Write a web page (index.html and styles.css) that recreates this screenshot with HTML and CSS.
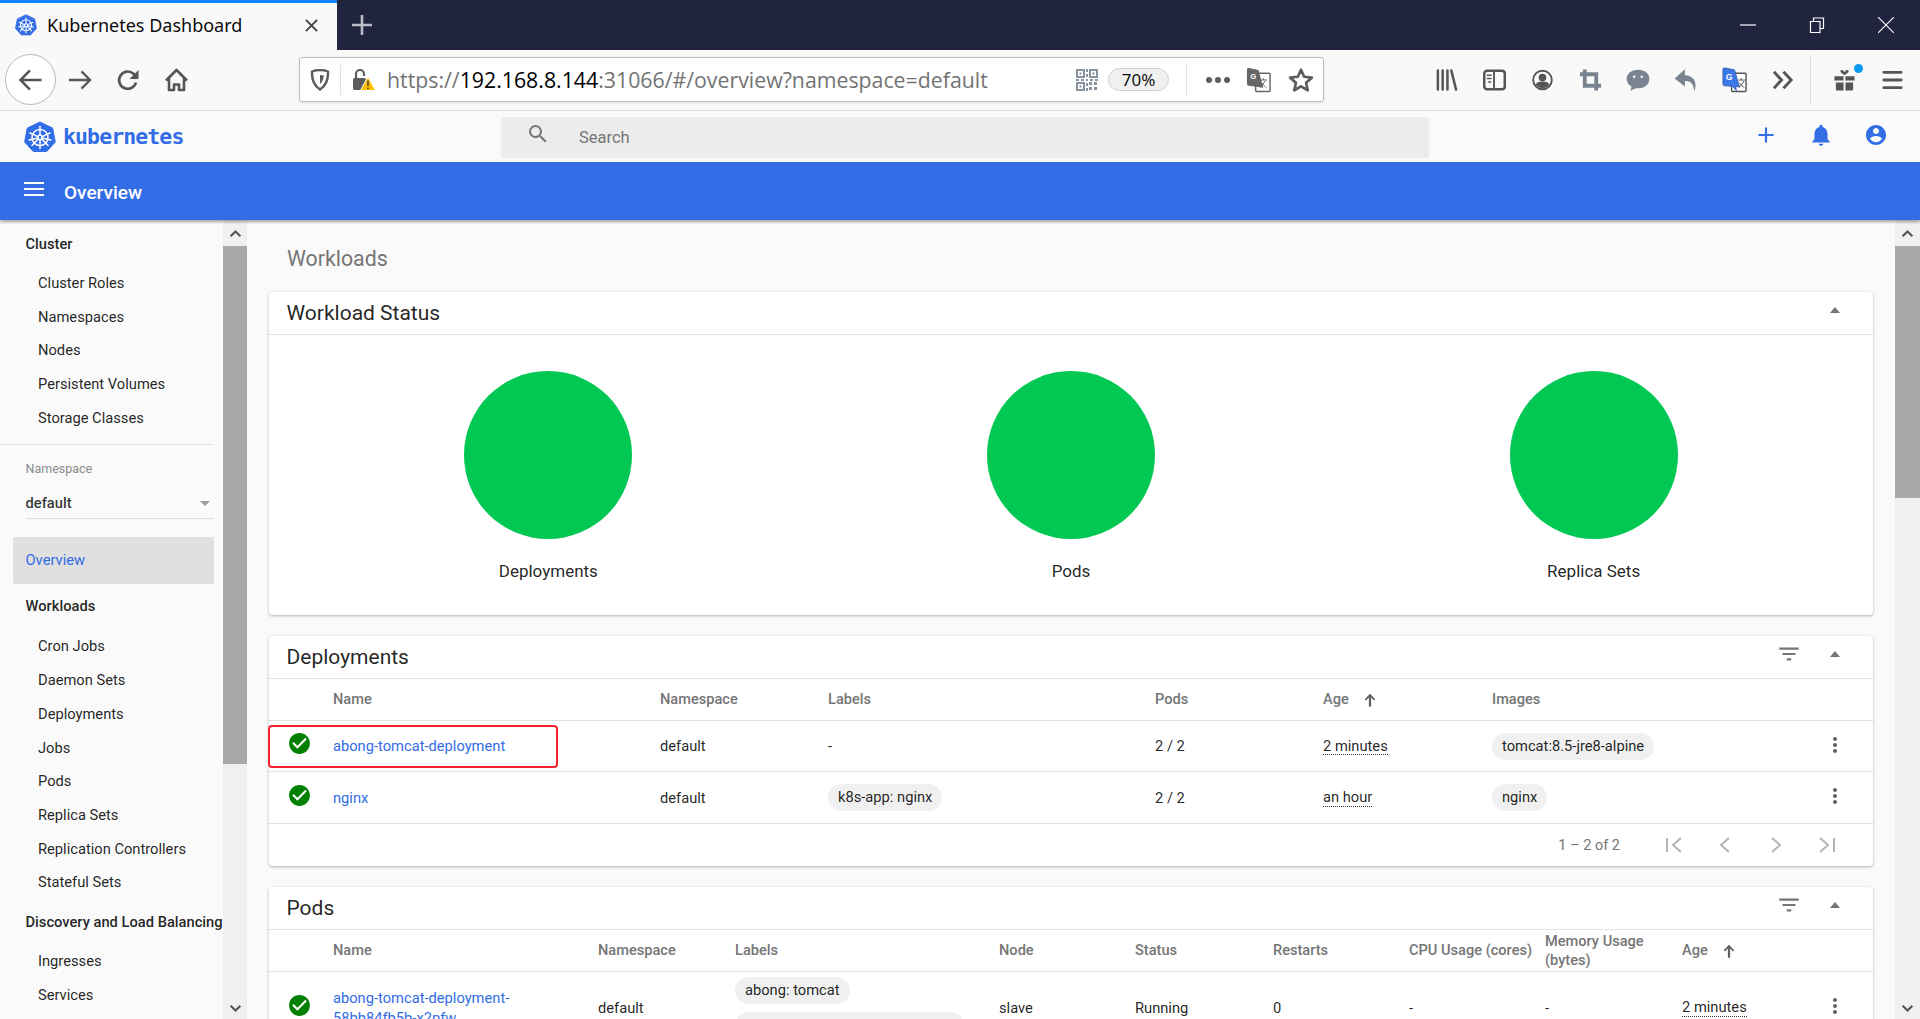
FILE: index.html
```html
<!DOCTYPE html>
<html lang="en">
<head>
<meta charset="utf-8">
<title>Kubernetes Dashboard</title>
<link rel="stylesheet" href="styles.css">
</head>
<body>
<svg class="defs" width="0" height="0" aria-hidden="true">
  <symbol id="k8s" viewBox="0 0 32 32">
    <path d="M16 .8 29.2 7.2 32 21.6 23 31.6 9 31.6 0 21.6 2.8 7.2Z" fill="#326de6" stroke="#326de6" stroke-linejoin="round" transform="translate(.6 .2) scale(.96)"/>
    <g fill="none" stroke="#fff" stroke-width="1.5" stroke-linecap="round">
      <circle cx="16" cy="16.5" r="8"/>
      <circle cx="16" cy="16.5" r="2.2"/>
      <path d="M16 14.3V5.5M16 18.7V27.5M13.9 15.6 6 12M18.1 15.6 26 12M14.2 18 8 24.5M17.8 18 24 24.5M13.8 17 5.2 19M18.2 17 26.8 19"/>
    </g>
  </symbol>
  <symbol id="ok" viewBox="0 0 24 24"><circle cx="12" cy="12" r="8" fill="#fff"/><path fill="#008000" d="M12 2C6.48 2 2 6.48 2 12s4.48 10 10 10 10-4.48 10-10S17.52 2 12 2zm-2 15l-5-5 1.41-1.41L10 14.17l7.59-7.59L19 8l-9 9z"/></symbol>
  <symbol id="filter" viewBox="0 0 24 24"><path fill="#757575" d="M10 18h4v-2h-4v2zM3 6v2h18V6H3zm3 7h12v-2H6v2z"/></symbol>
  <symbol id="kebab" viewBox="0 0 24 24"><path fill="#616161" d="M12 8c1.1 0 2-.9 2-2s-.9-2-2-2-2 .9-2 2 .9 2 2 2zm0 2c-1.1 0-2 .9-2 2s.9 2 2 2 2-.9 2-2-.9-2-2-2zm0 6c-1.1 0-2 .9-2 2s.9 2 2 2 2-.9 2-2-.9-2-2-2z"/></symbol>
  <symbol id="up" viewBox="0 0 24 24"><path fill="#616161" d="M5 11l1.5 1.5L10.5 8.5V21h3V8.500l4 4L19 11l-7-7.500z"/></symbol>
  <symbol id="tri" viewBox="0 0 12 8"><path fill="#757575" d="M6 1 11 7H1Z"/></symbol>
  <symbol id="scroll-up" viewBox="0 0 16 10"><path fill="none" stroke="#555" stroke-width="2.6" d="M2 8.5 8 2.5l6 6"/></symbol>
  <symbol id="scroll-down" viewBox="0 0 16 10"><path fill="none" stroke="#555" stroke-width="2.6" d="M2 1.5l6 6 6-6"/></symbol>
</svg>

<div class="tabbar">
  <div class="tab">
    <svg class="tab-favicon"><use href="#k8s"/></svg>
    <span class="tab-title">Kubernetes Dashboard</span>
    <svg class="tab-close" viewBox="0 0 16 16"><path d="M2 2 14 14M14 2 2 14" stroke="#444" stroke-width="2"/></svg>
  </div>
  <svg class="tab-new" viewBox="0 0 22 22"><path d="M11 1V21M1 11H21" stroke="#b9bbc6" stroke-width="2.6"/></svg>
  <div class="window-buttons">
    <svg class="win-btn" viewBox="0 0 16 16"><path d="M0 8H16" stroke="#fff" stroke-width="1.2"/></svg>
    <svg class="win-btn" viewBox="0 0 16 16"><path d="M1.5 4.5h9.5v11H1.5zM4.5 4.5V1h10v10.5H11" fill="none" stroke="#fff" stroke-width="1.2"/></svg>
    <svg class="win-btn" viewBox="0 0 16 16"><path d="M0 0 16 16M16 0 0 16" stroke="#fff" stroke-width="1.1"/></svg>
  </div>
</div>

<nav class="navbar">
  <div class="back-btn">
    <svg class="nav-svg" viewBox="0 0 26 24"><path d="M24.5 12H3M12.5 2 2.5 12l10 10" fill="none" stroke="#555" stroke-width="2.6"/></svg>
  </div>
  <div class="nav-btn"><svg class="nav-svg" viewBox="0 0 26 24"><path d="M1 12H23M14 3l9 9-9 9" fill="none" stroke="#5a5a5a" stroke-width="2.4"/></svg></div>
  <div class="nav-btn"><svg class="nav-svg" viewBox="0 0 24 24"><path d="M19.5 14.5A8.6 8.6 0 1 1 17 5.8L20.5 9" fill="none" stroke="#555" stroke-width="2.6"/><path d="M22 2v9h-9z" fill="#555"/></svg></div>
  <div class="nav-btn"><svg class="nav-svg" viewBox="0 0 24 24"><path d="M1.5 12.5 12 2l10.5 10.5M4.5 10.5V22h5v-5.5h5V22h5V10.5" fill="none" stroke="#555" stroke-width="2.6" stroke-linejoin="round"/></svg></div>

  <div class="urlbar">
    <svg class="url-shield" viewBox="0 0 20 22"><path d="M2 2.5Q10-.5 18 2.5 18.5 15 10 20.5 1.5 15 2 2.5Z" fill="none" stroke="#5c5c5c" stroke-width="2.4"/><path d="M10 6q3 0 3.8.5Q13.5 12 10 15Z" fill="#5c5c5c"/></svg>
    <span class="url-divider"></span>
    <svg class="url-lock" viewBox="0 0 24 24"><rect x="1" y="10" width="13" height="12" rx="1.5" fill="#5c5c5c"/><path d="M4 10V6a4 4 0 0 1 8 0v2" fill="none" stroke="#5c5c5c" stroke-width="2.2"/><path d="M16 8.5 23.5 22.5H8.5Z" fill="#ffbf00" stroke="#fff"/><path d="M16 12.5v5.5M16 19.5v1.5" stroke="#333" stroke-width="1.3"/></svg>
    <span class="url-text"><span class="url-dim">https://</span>192.168.8.144<span class="url-dim">:31066/#/overview?namespace=default</span></span>
    <svg class="url-qr" viewBox="0 0 22 22"><g fill="#8a93a0"><path d="M0 0h9v9H0zM2 2v5h5V2zM13 0h9v9h-9zM15 2v5h5V2zM0 13h9v9H0zM2 15v5h5v-5z" fill-rule="evenodd"/><rect x="3.5" y="3.5" width="2" height="2"/><rect x="16.5" y="3.5" width="2" height="2"/><rect x="3.5" y="16.5" width="2" height="2"/><path d="M10 0h2v3h-2zM10 5h2v3h-2zM0 10h3v2H0zM5 10h3v2H5zM10 10h2v2h-2zM14 10h3v2h-3zM19 10h3v2h-3zM10 14h2v3h-2zM10 19h2v3h-2zM13 13h3v3h-3zM18 13h3v3h-3zM13 18h3v3h-3zM18 18h3v3h-3z"/></g></svg>
    <span class="zoom-pill">70%</span>
    <span class="url-divider url-divider-right"></span>
    <span class="url-dots"><i></i><i></i><i></i></span>
    <svg class="url-translate" viewBox="0 0 26 28"><rect x="10" y="7" width="15" height="19" rx="1" fill="#fff" stroke="#666" stroke-width="1.5"/><path d="M1 3q0-2 2-1.5L13 3.5 18 22 3 20q-2 0-2-2Z" fill="#666"/><text x="4.5" y="13" class="url-translate-g">G</text><path d="M14 14h8M18 12v2M15 22l5-7M16 17l5 5" stroke="#666" stroke-width="1"/></svg>
    <svg class="url-star" viewBox="0 0 24 24"><path d="M12 2.5 14.9 9 22 9.8 16.7 14.5 18.2 21.5 12 17.9 5.8 21.5 7.3 14.5 2 9.8 9.1 9Z" fill="none" stroke="#5c5c5c" stroke-width="2.5" stroke-linejoin="round"/></svg>
  </div>

  <div class="nav-tools">
    <div class="nav-btn"><svg class="tool-svg" viewBox="0 0 24 24"><path d="M3 2v20M8 2v20M13 2v20M17 2l5 20" stroke="#555" stroke-width="2.6" stroke-linecap="round"/></svg></div>
    <div class="nav-btn"><svg class="tool-svg" viewBox="0 0 24 24"><rect x="1.3" y="2.3" width="21.4" height="19.4" rx="3" fill="none" stroke="#555" stroke-width="2.6"/><path d="M11.5 3v18" stroke="#555" stroke-width="2"/><path d="M4 7h5M4 10.5h5M5.5 14h3" stroke="#555" stroke-width="1.5"/></svg></div>
    <div class="nav-btn"><svg class="tool-svg" viewBox="0 0 24 24"><circle cx="12" cy="12" r="9.7" fill="none" stroke="#555" stroke-width="2"/><circle cx="12" cy="9.5" r="4" fill="#555"/><path d="M4.8 17q1-3.5 7.2-3.5T19.2 17q-3 3.5-7.2 3.5T4.8 17Z" fill="#555"/></svg></div>
    <div class="nav-btn"><svg class="tool-svg" viewBox="0 0 24 24"><path d="M6 1V18H23M1 6H18V23" fill="none" stroke="#78828e" stroke-width="4"/></svg></div>
    <div class="nav-btn"><svg class="tool-svg tool-wide" viewBox="0 0 24 24"><path d="M12 2.5C5.5 2.5 1.5 6.5 1.5 11c0 3 2 5.5 4.5 7l-1 4 5-2.5c.8.1 1.500.2 2 .2 6.500 0 10.500-4 10.500-8.700S18.500 2.500 12 2.500Z" fill="#7a8490"/><circle cx="8.5" cy="9" r="1.2" fill="#f9f9fa"/><circle cx="15.5" cy="9" r="1.2" fill="#f9f9fa"/></svg></div>
    <div class="nav-btn"><svg class="tool-svg tool-wide" viewBox="0 0 24 24"><path d="M11 2 1.5 10.5 11 18v-5c5 0 8 2 8.5 9.5C23 15 19.5 7.5 11 7.5Z" fill="#7a8490"/></svg></div>
    <div class="nav-btn"><svg class="tool-svg tool-translate" viewBox="0 0 26 28"><rect x="10" y="7" width="15" height="19" rx="1" fill="#fff" stroke="#555" stroke-width="1.5"/><path d="M1 3q0-2 2-1.5L13 3.5 18 21 14 21 15 25 11 20.5 3 20q-2 0-2-2Z" fill="#3b78e7" stroke="#3461b8"/><text x="4" y="14" class="tool-translate-g">G</text><path d="M17 14h7M20 12v2M18 22l5-7M18 17l5 5" stroke="#555" stroke-width="1"/></svg></div>
    <div class="nav-btn nav-btn-more"><svg class="tool-svg" viewBox="0 0 24 24"><path d="M2 3.5 10 12l-8 8.5M12 3.5l8 8.5-8 8.5" fill="none" stroke="#555" stroke-width="3"/></svg></div>
    <span class="tool-divider"></span>
    <div class="nav-btn nav-btn-gift">
      <svg class="tool-svg" viewBox="0 0 24 24"><path d="M1.5 8h9.5v4.5H1.5zM13 8h9.5v4.5H13zM3 14.5h8V23H4q-1 0-1-1zM13 14.5h8V22q0 1-1 1h-7zM12 7 8 4q-1-2.5 1-2.5 2 0 3 2.5 1-2.5 3-2.5 2 0 1 2.5Z" fill="#555"/></svg>
      <span class="gift-badge"></span>
    </div>
    <div class="nav-btn"><svg class="tool-svg" viewBox="0 0 24 24"><path d="M3 4H21M3 12H21M3 20H21" stroke="#555" stroke-width="3" stroke-linecap="round"/></svg></div>
  </div>
</nav>

<header class="kd-toolbar">
  <div class="kd-brand">
    <svg class="kd-logo"><use href="#k8s"/></svg>
    <span class="kd-word">kubernetes</span>
  </div>
  <div class="kd-search">
    <svg class="kd-search-icon" viewBox="0 0 24 24"><path fill="#757575" d="M15.5 14h-.79l-.28-.27A6.471 6.471 0 0 0 16 9.5 6.5 6.5 0 1 0 9.5 16c1.61 0 3.09-.59 4.23-1.57l.27.28v.79l5 4.99L20.49 19l-4.99-5zm-6 0C7.01 14 5 11.99 5 9.5S7.01 5 9.5 5 14 7.01 14 9.5 11.99 14 9.5 14z"/></svg>
    <span class="kd-search-text">Search</span>
  </div>
  <div class="kd-actions">
    <svg class="kd-action kd-action-big" viewBox="0 0 24 24"><path fill="#326de6" d="M19 13h-6v6h-2v-6H5v-2h6V5h2v6h6v2z"/></svg>
    <svg class="kd-action kd-action-big" viewBox="0 0 24 24"><path fill="#326de6" d="M12 22c1.1 0 2-.9 2-2h-4c0 1.1.89 2 2 2zm6-6v-5c0-3.07-1.64-5.64-4.5-6.32V4c0-.83-.67-1.5-1.5-1.5s-1.5.67-1.5 1.5v.68C7.63 5.36 6 7.92 6 11v5l-2 2v1h16v-1l-2-2z"/></svg>
    <svg class="kd-action kd-action-user" viewBox="0 0 24 24"><path fill="#326de6" d="M12 2C6.48 2 2 6.48 2 12s4.48 10 10 10 10-4.48 10-10S17.52 2 12 2zm0 3c1.66 0 3 1.34 3 3s-1.34 3-3 3-3-1.34-3-3 1.34-3 3-3zm0 14.2c-2.5 0-4.71-1.28-6-3.22.03-1.99 4-3.08 6-3.08 1.99 0 5.97 1.09 6 3.08-1.29 1.94-3.5 3.22-6 3.22z"/></svg>
  </div>
</header>

<div class="kd-bluebar">
  <svg class="kd-menu" viewBox="0 0 20 16"><path d="M0 2H20M0 8H20M0 14H20" stroke="#fff" stroke-width="2.2"/></svg>
  <span class="kd-crumb">Overview</span>
</div>

<div class="workspace">
  <aside class="sidebar">
    <div class="side-title side-title-first">Cluster</div>
    <a class="side-item">Cluster Roles</a>
    <a class="side-item">Namespaces</a>
    <a class="side-item">Nodes</a>
    <a class="side-item">Persistent Volumes</a>
    <a class="side-item">Storage Classes</a>
    <div class="side-divider"></div>
    <div class="ns-label">Namespace</div>
    <div class="ns-select"><span>default</span><i class="ns-caret"></i></div>
    <div class="side-active">Overview</div>
    <div class="side-title">Workloads</div>
    <a class="side-item">Cron Jobs</a>
    <a class="side-item">Daemon Sets</a>
    <a class="side-item">Deployments</a>
    <a class="side-item">Jobs</a>
    <a class="side-item">Pods</a>
    <a class="side-item">Replica Sets</a>
    <a class="side-item">Replication Controllers</a>
    <a class="side-item">Stateful Sets</a>
    <div class="side-title">Discovery and Load Balancing</div>
    <a class="side-item">Ingresses</a>
    <a class="side-item">Services</a>
  </aside>
  <div class="scrolltrack">
    <div class="scroll-btn"><svg class="scroll-arrow"><use href="#scroll-up"/></svg></div>
    <div class="scroll-thumb thumb-side"></div>
    <div class="scroll-btn scroll-btn-end"><svg class="scroll-arrow"><use href="#scroll-down"/></svg></div>
  </div>

  <main class="content">
    <h1 class="page-title">Workloads</h1>

    <section class="card card-status">
      <div class="card-head">
        <h2 class="card-title">Workload Status</h2>
        <svg class="head-tri"><use href="#tri"/></svg>
      </div>
      <div class="status-grid">
        <div class="status-col"><div class="status-dot"></div><div class="status-label">Deployments</div></div>
        <div class="status-col"><div class="status-dot"></div><div class="status-label">Pods</div></div>
        <div class="status-col"><div class="status-dot"></div><div class="status-label">Replica Sets</div></div>
      </div>
    </section>

    <section class="card">
      <div class="card-head">
        <h2 class="card-title">Deployments</h2>
        <svg class="head-filter"><use href="#filter"/></svg>
        <svg class="head-tri"><use href="#tri"/></svg>
      </div>
      <div class="row row-dep row-head">
        <span></span><span>Name</span><span>Namespace</span><span>Labels</span><span>Pods</span>
        <span class="sort-cell">Age <svg class="sort-icon"><use href="#up"/></svg></span><span>Images</span>
      </div>
      <div class="row row-dep row-body row-first">
        <svg class="ok-icon"><use href="#ok"/></svg>
        <a class="link">abong-tomcat-deployment</a>
        <span>default</span><span>-</span><span>2 / 2</span>
        <span><span class="time">2 minutes</span></span>
        <span><span class="chip">tomcat:8.5-jre8-alpine</span></span>
        <svg class="kebab"><use href="#kebab"/></svg>
        <span class="annotation"></span>
      </div>
      <div class="row row-dep row-body">
        <svg class="ok-icon"><use href="#ok"/></svg>
        <a class="link">nginx</a>
        <span>default</span>
        <span><span class="chip">k8s-app: nginx</span></span>
        <span>2 / 2</span>
        <span><span class="time">an hour</span></span>
        <span><span class="chip">nginx</span></span>
        <svg class="kebab"><use href="#kebab"/></svg>
      </div>
      <div class="pager">
        <span class="pager-text">1 – 2 of 2</span>
        <svg class="pager-icon" viewBox="0 0 24 24"><path d="M5 5V19M19 5 11 12l8 7" fill="none" stroke="#b4b4b4" stroke-width="2"/></svg>
        <svg class="pager-icon" viewBox="0 0 24 24"><path d="M16 5 8 12l8 7" fill="none" stroke="#b4b4b4" stroke-width="2"/></svg>
        <svg class="pager-icon" viewBox="0 0 24 24"><path d="M8 5l8 7-8 7" fill="none" stroke="#b4b4b4" stroke-width="2"/></svg>
        <svg class="pager-icon" viewBox="0 0 24 24"><path d="M19 5V19M5 5l8 7-8 7" fill="none" stroke="#b4b4b4" stroke-width="2"/></svg>
      </div>
    </section>

    <section class="card">
      <div class="card-head">
        <h2 class="card-title">Pods</h2>
        <svg class="head-filter"><use href="#filter"/></svg>
        <svg class="head-tri"><use href="#tri"/></svg>
      </div>
      <div class="row row-pod row-head">
        <span></span><span>Name</span><span>Namespace</span><span>Labels</span><span>Node</span><span>Status</span><span>Restarts</span><span>CPU Usage (cores)</span>
        <span>Memory Usage<br>(bytes)</span>
        <span class="sort-cell">Age <svg class="sort-icon"><use href="#up"/></svg></span>
      </div>
      <div class="row row-pod row-body row-tall">
        <svg class="ok-icon"><use href="#ok"/></svg>
        <a class="link">abong-tomcat-deployment-<br>58bb84fb5b-x2pfw</a>
        <span>default</span>
        <span class="chips"><span class="chip">abong: tomcat</span><span class="chip">pod-template-hash: 58bb84fb5b</span></span>
        <span>slave</span><span>Running</span><span>0</span><span>-</span><span>-</span>
        <span><span class="time">2 minutes</span></span>
        <svg class="kebab"><use href="#kebab"/></svg>
      </div>
    </section>
  </main>
  <div class="scrolltrack scrolltrack-main">
    <div class="scroll-btn"><svg class="scroll-arrow"><use href="#scroll-up"/></svg></div>
    <div class="scroll-thumb thumb-main"></div>
    <div class="scroll-btn scroll-btn-end"><svg class="scroll-arrow"><use href="#scroll-down"/></svg></div>
  </div>
</div>
</body>
</html>
```

FILE: styles.css
```css
* { box-sizing: border-box; }
html, body { height: 100%; }
body {
  margin: 0;
  height: 1019px;
  overflow: hidden;
  display: flex;
  flex-direction: column;
  font-family: Roboto, "Liberation Sans", sans-serif;
  font-size: 14px;
  color: rgba(0,0,0,.87);
  background: #fafafa;
}
.defs { position: absolute; }
h1, h2 { margin: 0; font-weight: 400; }

/* browser tab strip */
.tabbar { flex: 0 0 50px; display: flex; align-items: center; background: #20243f; }
.tab {
  width: 337px; height: 50px; display: flex; align-items: center;
  background: #f9f9fa; border-top: 3px solid #0a84ff;
  padding: 0 0 3px 15px; font-family: "Noto Sans", sans-serif;
}
.tab-favicon { width: 22px; height: 22px; }
.tab-title { margin-left: 10px; font-size: 18px; color: #0c0c0d; white-space: nowrap; }
.tab-close { width: 15px; height: 15px; margin-left: auto; margin-right: 18px; }
.tab-new { width: 22px; height: 22px; margin-left: 14px; }
.window-buttons { margin-left: auto; display: flex; gap: 53px; padding-right: 26px; }
.win-btn { width: 16px; height: 16px; }

/* browser nav */
.navbar {
  flex: 0 0 61px; display: flex; align-items: center; background: #f9f9fa;
  border-bottom: 1px solid #dcdcdc; padding: 0 0 1px 5px;
}
.back-btn {
  width: 51px; height: 51px; border-radius: 50%; border: 1px solid #b8b8b8; background: #fff;
  display: flex; align-items: center; justify-content: center;
}
.nav-btn { position: relative; width: 48px; height: 48px; display: flex; align-items: center; justify-content: center; flex: none; }
.nav-svg { width: 25px; height: 24px; }
.urlbar {
  margin-left: 99px; width: 1025px; height: 45px; flex: none; display: flex; align-items: center;
  background: #fff; border: 1px solid #bdbdbd; border-radius: 3px; box-shadow: 0 1px 3px rgba(0,0,0,.1);
}
.url-shield { width: 20px; height: 22px; margin-left: 10px; flex: none; }
.url-divider { width: 1px; height: 30px; background: #e0e0e0; margin-left: 10px; flex: none; }
.url-lock { width: 24px; height: 26px; margin-left: 11px; flex: none; }
.url-text { margin-left: 11px; font: 21.3px "Open Sans", "Noto Sans", sans-serif; color: #000; white-space: nowrap; width: 689px; flex: none; }
.url-dim { color: #737373; }
.url-qr { width: 22px; height: 22px; flex: none; }
.zoom-pill {
  margin-left: 10px; width: 61px; height: 23px; border-radius: 12px; border: 1px solid #d0d0d0; background: #f0f0f0;
  font: 17px/21px "Noto Sans", sans-serif; text-align: center; color: #111; flex: none;
}
.url-divider-right { margin-left: 17px; }
.url-dots { display: flex; gap: 3px; margin-left: 18.5px; flex: none; }
.url-dots i { width: 6px; height: 6px; border-radius: 50%; background: #5c5c5c; }
.url-translate { width: 25px; height: 28px; margin-left: 16.5px; flex: none; }
.url-translate-g { font: bold 8px "Liberation Sans", sans-serif; fill: #fff; }
.url-star { width: 26px; height: 26px; margin-left: 17px; flex: none; }
.nav-tools { display: flex; align-items: center; flex: none; margin-left: 98px; }
.tool-svg { width: 23px; height: 24px; }
.tool-wide { width: 26px; height: 26px; }
.tool-translate { width: 25px; height: 28px; }
.tool-translate-g { font: bold 9px "Liberation Sans", sans-serif; fill: #fff; }
.nav-btn-more { margin-left: 1px; }
.tool-divider { width: 1px; height: 50px; background: #dedede; margin-left: 3px; }
.nav-btn-gift { margin-left: 9px; }
.gift-badge { position: absolute; top: 8px; right: 5px; width: 9px; height: 9px; border-radius: 50%; background: #0a9cf5; }

/* dashboard toolbar */
.kd-toolbar { flex: 0 0 51px; display: flex; align-items: center; background: #fafafa; }
.kd-brand { width: 501px; display: flex; align-items: center; padding: 0 0 0 24px; flex: none; }
.kd-logo { width: 32px; height: 32px; flex: none; }
.kd-word { margin-left: 7px; font: bold 21.5px "DejaVu Sans Mono", monospace; letter-spacing: -.9px; color: #326de6; }
.kd-search { width: 928px; height: 41px; margin-top: 1px; display: flex; align-items: center; background: #ececec; border-radius: 2px; flex: none; }
.kd-search-icon { width: 24px; height: 24px; margin: -6px 0 0 25px; }
.kd-search-text { margin-left: 29px; font-size: 16.5px; color: #757575; }
.kd-actions { display: flex; gap: 29px; margin-left: 324px; margin-top: -4px; align-items: center; }
.kd-action { width: 24px; height: 24px; }
.kd-action-big { width: 26px; height: 26px; }
.kd-action-big:first-child { margin-top: 1px; }
.kd-action-user { margin-left: 1px; }

.kd-bluebar {
  flex: 0 0 58px; display: flex; align-items: center; padding: 0 0 0 24px; background: #326de6;
  box-shadow: 0 2px 3px rgba(0,0,0,.35); position: relative; z-index: 2;
}
.kd-menu { width: 20px; height: 16px; margin-top: -4px; }
.kd-crumb { margin-left: 20px; font-size: 19px; font-weight: 500; color: #fff; padding-top: 3px; }

/* page body */
.workspace { flex: 1 1 auto; min-height: 0; display: flex; overflow: hidden; }
.sidebar { width: 223px; flex: none; padding-top: 7px; overflow: hidden; background: #fafafa; }
.side-title {
  height: 34px; margin-top: 5px; margin-bottom: 6px; padding-left: 25.5px; line-height: 34px;
  font-size: 14.7px; font-weight: 500; white-space: nowrap; overflow: hidden;
}
.side-title-first { margin-top: 0; }
.side-item { display: block; height: 33.7px; line-height: 33.7px; padding-left: 38px; font-size: 14.7px; white-space: nowrap; }
.side-divider { height: 1px; width: 214px; margin-top: 9px; background: #e0e0e0; }
.ns-label { margin: 15px 0 0 25.5px; font-size: 12.5px; line-height: 17px; color: #8a8a8a; }
.ns-select {
  margin: 9px 9px 0 25.5px; height: 33px; display: flex; align-items: center; justify-content: space-between;
  border-bottom: 1px solid #dcdcdc; font-size: 14.7px; font-weight: 500; padding-top: 2px; color: rgba(0,0,0,.8);
}
.ns-caret { width: 0; height: 0; border: 5px solid transparent; border-top-color: #9e9e9e; border-bottom: 0; margin-right: 4px; }
.side-active {
  margin: 18px 9px 0 13px; height: 47px; line-height: 47px; padding-left: 12.5px;
  background: #e0e0e0; border-radius: 2px; font-size: 14.7px; color: #326de6;
}
.side-active + .side-title { margin-top: 5px; margin-bottom: 7px; }

.scrolltrack { width: 24px; flex: none; display: flex; flex-direction: column; background: #f0f0f0; }
.scrolltrack-main { width: 25px; }
.scroll-btn { height: 26px; flex: none; display: flex; align-items: center; justify-content: center; }
.scroll-btn-end { margin-top: auto; height: 22px; }
.scroll-arrow { width: 13px; height: 9px; }
.scroll-thumb { background: #a8a8a8; flex: none; }
.thumb-side { height: 518px; }
.thumb-main { height: 252px; }

.content { flex: 1 1 auto; min-width: 0; padding: 0 22px; overflow: hidden; }
.page-title { height: 72px; padding: 25px 0 0 18px; font-size: 21.3px; line-height: 28px; color: #757575; }
.card { background: #fff; border-radius: 4px; box-shadow: 0 1px 3px rgba(0,0,0,.3); margin-bottom: 21px; }
.card-status { height: 323px; }
.card-head { height: 43px; display: flex; align-items: center; padding: 0 0 0 17.5px; border-bottom: 1px solid #e0e0e0; position: relative; }
.card-title { font-size: 21px; line-height: 28px; margin-right: auto; }
.head-filter { width: 26px; height: 26px; margin-right: 27px; margin-top: -6px; }
.head-tri { width: 12px; height: 8px; margin-right: 32px; margin-top: -6px; }
.status-grid { display: grid; grid-template-columns: repeat(3, 1fr); padding: 0 18px; }
.status-col { display: flex; flex-direction: column; align-items: center; padding-top: 36px; }
.status-dot { width: 168px; height: 168px; border-radius: 50%; background: #00c853; }
.status-label { margin-top: 21px; font-size: 17px; line-height: 22px; }

.row { display: grid; align-items: center; position: relative; border-bottom: 1px solid #e0e0e0; font-size: 14.7px; }
.row-dep { grid-template-columns: 64px 327px 168px 327px 168px 169px 323px 40px 18px; }
.row-pod { grid-template-columns: 64px 265px 137px 264px 136px 138px 136px 136px 137px 133px 40px 18px; }
.row-head { height: 42px; font-weight: 500; font-size: 14.6px; line-height: 19px; color: #757575; }
.row-body { height: 52px; }
.row-first { height: 51px; }
.row-tall { height: 72px; }
.sort-cell { display: flex; align-items: center; gap: 12px; }
.sort-icon { width: 18px; height: 18px; }
.ok-icon { width: 25px; height: 25px; justify-self: center; margin: -5px 0 0 -3px; }
.link { color: #326de6; line-height: 20px; padding-top: 1px; }
.row-first .link { padding-top: 0; }
.time { border-bottom: 1px dotted #333; line-height: 1.1; display: inline-block; }
.chip { display: inline-block; height: 27px; line-height: 27px; padding: 0 10px; background: #f0f0f0; border-radius: 14px; white-space: nowrap; }
.chips { display: flex; flex-direction: column; align-items: flex-start; gap: 8px; }
.kebab { width: 24px; height: 24px; justify-self: center; margin-top: -3px; }
.annotation { position: absolute; left: -1px; top: 4px; width: 290px; height: 43px; border: 2px solid #f5222d; border-radius: 4px; }
.pager { height: 42px; display: flex; align-items: center; padding: 0 34px 0 0; justify-content: flex-end; color: #757575; }
.pager-text { margin-right: 42px; font-size: 14.5px; }
.pager-icon { width: 24px; height: 24px; margin-left: 27px; }
.pager-text + .pager-icon { margin-left: 0; }
```
